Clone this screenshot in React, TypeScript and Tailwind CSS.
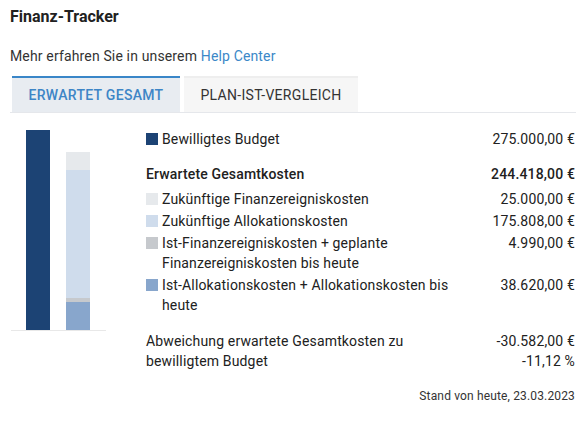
import React from "react";

const rows = [
  { color: "bg-[#e6e9ec]", label: "Zukünftige Finanzereigniskosten", value: "25.000,00 €" },
  { color: "bg-[#cfdcec]", label: "Zukünftige Allokationskosten", value: "175.808,00 €" },
  { color: "bg-[#c6c9cd]", label: "Ist-Finanzereigniskosten + geplante Finanzereigniskosten bis heute", value: "4.990,00 €" },
  { color: "bg-[#88a6cc]", label: "Ist-Allokationskosten + Allokationskosten bis heute", value: "38.620,00 €" },
];

export default function App() {
  const scale = 200 / 275000;
  return (
    <div className="w-[586px] h-[426px] bg-white text-[#212121] px-[10px] pt-[5px]" style={{ fontFamily: "Roboto, 'Liberation Sans', sans-serif" }}>
      <div className="text-[16px] font-bold leading-[24px]">Finanz-Tracker</div>
      <div className="mt-[17px] text-[14px] leading-[20px] text-[#333] tracking-[0.15px]">
        Mehr erfahren Sie in unserem <span className="text-[#3b88c8]">Help Center</span>
      </div>
      <div className="mt-[10px] flex gap-[4px] border-b border-[#e5e7eb] pl-[2px]">
        <div className="w-[168px] h-[36px] border-t-2 border-[#3a86c8] bg-[#e8ecf1] flex items-center justify-center text-[14px] font-medium text-[#3d85c6] tracking-[0.3px]">
          ERWARTET GESAMT
        </div>
        <div className="w-[174px] h-[36px] border-t-2 border-[#eeeeee] bg-[#f6f6f6] flex items-center justify-center text-[14px] text-[#333] tracking-[0.3px]">
          PLAN-IST-VERGLEICH
        </div>
      </div>
      <div className="flex pr-[1px]">
        <div className="w-[95px] ml-[1px] pt-[17px]">
          <div className="h-[201px] flex items-end gap-[16px] pl-[15px] border-b border-[#e8e8e8]">
            <div className="w-[24px] bg-[#1c4374]" style={{ height: 275000 * scale }} />
            <div className="w-[24px] flex flex-col">
              <div className="bg-[#e6e9ec]" style={{ height: 25000 * scale }} />
              <div className="bg-[#cfdcec]" style={{ height: 175808 * scale }} />
              <div className="bg-[#c6c9cd]" style={{ height: 4990 * scale }} />
              <div className="bg-[#88a6cc]" style={{ height: 38620 * scale }} />
            </div>
          </div>
        </div>
        <div className="flex-1 ml-[40px] pt-[16px] text-[14px] leading-[20px] tracking-[0.15px]">
          <div className="flex justify-between">
            <div className="flex">
              <span className="w-[12px] h-[12px] mt-[4px] mr-[4px] bg-[#1c4374] shrink-0" />
              <span>Bewilligtes Budget</span>
            </div>
            <span>275.000,00 €</span>
          </div>
          <div className="flex justify-between mt-[15px] font-medium">
            <span>Erwartete Gesamtkosten</span>
            <span>244.418,00 €</span>
          </div>
          <div className="mt-[5px] flex flex-col gap-[2px]">
            {rows.map((r) => (
              <div key={r.label} className="flex justify-between">
                <div className="flex w-[305px]">
                  <span className={`w-[12px] h-[12px] mt-[4px] mr-[4px] shrink-0 ${r.color}`} />
                  <span>{r.label}</span>
                </div>
                <span className="whitespace-nowrap">{r.value}</span>
              </div>
            ))}
          </div>
          <div className="flex justify-between mt-[16px]">
            <div className="w-[275px]">Abweichung erwartete Gesamtkosten zu bewilligtem Budget</div>
            <div className="text-right">
              <div>-30.582,00 €</div>
              <div>-11,12 %</div>
            </div>
          </div>
          <div className="mt-[17px] text-right text-[12px] leading-[16px] text-[#333]">Stand von heute, 23.03.2023</div>
        </div>
      </div>
    </div>
  );
}
